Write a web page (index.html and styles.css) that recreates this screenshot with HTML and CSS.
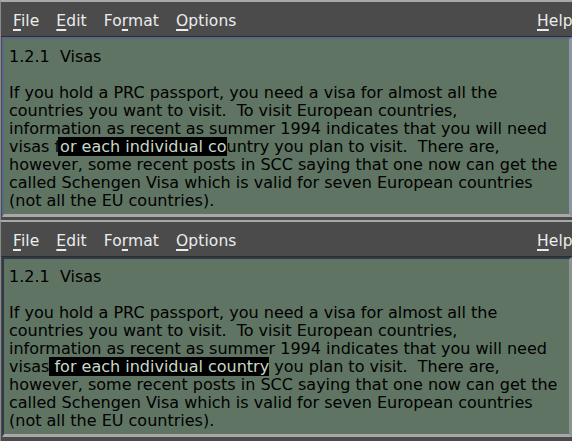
FILE: index.html
```html
<!DOCTYPE html>
<html lang="en">
<head>
  <meta charset="UTF-8">
  <title>Visas</title>
  <link rel="stylesheet" href="styles.css">
</head>
<body>
  <!-- First window: focused, partial selection -->
  <div class="window">
    <div class="menubar">
      <span class="menu"><u>F</u>ile</span>
      <span class="menu"><u>E</u>dit</span>
      <span class="menu">Fo<u>r</u>mat</span>
      <span class="menu"><u>O</u>ptions</span>
      <span class="menu help"><u>H</u>elp</span>
    </div>
    <div class="text focused">
      <p>1.2.1&nbsp; Visas</p>
      <p>If you hold a PRC passport, you need a visa for almost all the<br>
countries you want to visit.&nbsp; To visit European countries,<br>
information as recent as summer 1994 indicates that you will need<br>
visas f<span class="sel cut">or each individual co</span>untry you plan to visit.&nbsp; There are,<br>
however, some recent posts in SCC saying that one now can get the<br>
called Schengen Visa which is valid for seven European countries<br>
(not all the EU countries).</p>
    </div>
  </div>

  <!-- Second window: whole phrase selected -->
  <div class="window">
    <div class="menubar">
      <span class="menu"><u>F</u>ile</span>
      <span class="menu"><u>E</u>dit</span>
      <span class="menu">Fo<u>r</u>mat</span>
      <span class="menu"><u>O</u>ptions</span>
      <span class="menu help"><u>H</u>elp</span>
    </div>
    <div class="text">
      <p>1.2.1&nbsp; Visas</p>
      <p>If you hold a PRC passport, you need a visa for almost all the<br>
countries you want to visit.&nbsp; To visit European countries,<br>
information as recent as summer 1994 indicates that you will need<br>
visas<span class="sel"> for each individual country</span> you plan to visit.&nbsp; There are,<br>
however, some recent posts in SCC saying that one now can get the<br>
called Schengen Visa which is valid for seven European countries<br>
(not all the EU countries).</p>
    </div>
  </div>
</body>
</html>
```

FILE: styles.css
```css
body {
  margin: 0;
  width: 572px;
  height: 441px;
  overflow: hidden;
  background-color: #4b4b4b;
  font-family: "DejaVu Sans", sans-serif;
}
.window {
  width: 578px;
  height: 218px;
  border-top: 2px solid #a8a8a8;
  border-left: 1px solid #8a8a8a;
  background-color: #4b4b4b;
}
.window + .window {
  height: 219px;
}
.menubar {
  display: flex;
  height: 31px;
  padding-top: 3px;
  align-items: center;
  padding-left: 12px;
  border-bottom: 1px solid #2c2c2c;
  color: #ececec;
  font-size: 15.5px;
  letter-spacing: 0.1px;
}
.menu {
  margin-right: 17px;
}
.menu u {
  text-decoration-thickness: 2px;
  text-underline-offset: 3px;
}
.menu.help {
  margin-left: auto;
  margin-right: 0;
  width: 42px;
}
.text {
  width: 556px;
  margin-left: 1px;
  padding: 9px 4px 4px 5px;
  border-style: solid;
  border-width: 2px 3px 3px 2px;
  border-color: #2e3a4a #909090 #a8a8a8 #2e3a4a;
  background-color: #5f7462;
  color: #000;
  font-size: 16px;
  line-height: 18px;
}
.text.focused {
  border-color: #556a8a #8a95a8 #a8a8a8 #556a8a;
}
.text p {
  margin: 0 0 18px;
  white-space: nowrap;
}
.text p:last-child {
  margin-bottom: 0;
}
.sel {
  background-color: #000;
  color: #c8d8c8;
}
.sel.cut {
  margin-left: -2px;
  padding-left: 2px;
}
```
